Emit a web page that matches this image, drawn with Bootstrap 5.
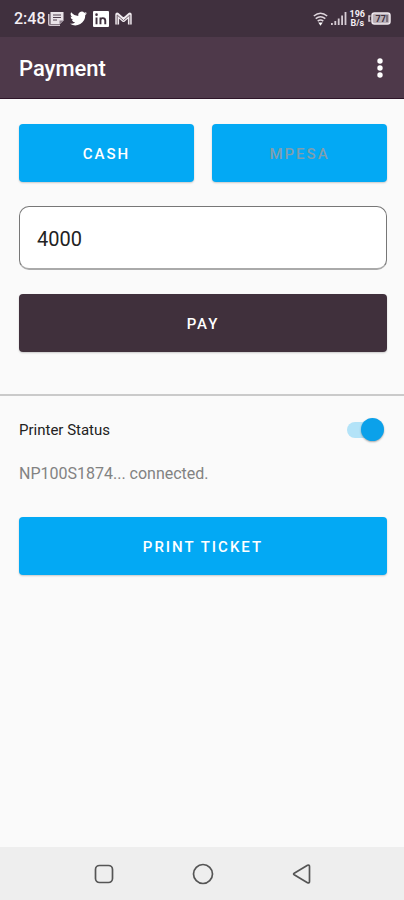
<!DOCTYPE html>
<html lang="en">
<head>
<meta charset="utf-8">
<meta name="viewport" content="width=device-width, initial-scale=1">
<title>Payment</title>
<link href="https://cdn.jsdelivr.net/npm/bootstrap@5.3.0/dist/css/bootstrap.min.css" rel="stylesheet">
<style>
  body { font-family: Roboto, "Liberation Sans", sans-serif; background: #fafafa; }
  svg { display: block; flex: none; }
  .status-bar { background: #40303e; height: 37px; padding: 0 13px 0 14px; color: #f4eef3; }
  .clock { font-size: 16px; line-height: 20px; font-weight: 500; margin-right: -4px; }
  .notices { gap: 6px; }
  .signals { gap: 3px; }
  .net-speed { font-size: 9px; line-height: 9px; font-weight: 700; }
  .app-bar { background: #4e394a; height: 62px; padding: 0 17px 0 19px; border-bottom: 1px solid #2e1529; }
  .app-title { font-size: 22px; line-height: 28px; font-weight: 500; padding-top: 2px; }
  .section { padding: 0 17px 0 19px; }
  .pay-form { padding-top: 25px; padding-bottom: 42px; gap: 24px; border-bottom: 2px solid #cacaca; }
  .pair { gap: 18px; }
  .action { height: 58px; border: 0; border-radius: 4px; padding: 8px 12px 6px; font-size: 15px; line-height: 20px; font-weight: 500; letter-spacing: 2px; color: #fff; background: #03a9f4; box-shadow: 0 1px 2px #0003; }
  .action:hover { background: #0398db; color: #fff; }
  .action:disabled { background: #03a9f4; color: #7f9fae; opacity: 1; }
  .action-dark, .action-dark:hover { background: #40303c; }
  .amount { height: 64px; border: 1px solid #777; border-bottom: 2px solid #aaa; border-radius: 10px; padding: 2px 17px 0; font-size: 20px; background: #fff; color: #222; }
  .printer { padding-top: 22px; }
  .printer-label { font-size: 15px; line-height: 24px; color: #222; }
  .printer-note { font-size: 16px; line-height: 24px; color: #828282; margin: 20px 0 31px; }
  .toggle { appearance: none; position: relative; width: 37px; height: 24px; margin: 0 3px 0 0; cursor: pointer; }
  .toggle::before { content: ""; position: absolute; left: 0; top: 4px; width: 34px; height: 16px; border-radius: 8px; background: #b3e3f8; }
  .toggle::after { content: ""; position: absolute; right: 0; top: 0; width: 23px; height: 23px; border-radius: 50%; background: #0ba1ea; box-shadow: 0 1px 2px #0005; }
  .toggle:not(:checked)::after { right: 14px; background: #f1f1f1; }
  .nav-keys { background: #eee; height: 53px; padding: 0 53px 0 55px; }
  .nav-keys .btn { width: 99px; }
</style>
<script defer src="https://cdn.jsdelivr.net/npm/bootstrap@5.3.0/dist/js/bootstrap.bundle.min.js"></script>
</head>
<body class="d-flex flex-column min-vh-100">
<div class="status-bar d-flex align-items-center justify-content-between">
  <div class="notices d-flex align-items-center">
    <span class="clock">2:48</span>
    <svg width="16" height="16" viewBox="0 0 16 16" aria-hidden="true"><path d="M0 3h1.500v10.500H12V15H2Q0 15 0 13z" fill="#cfc5cd"/><path d="M2.500 1h13v8.500L12 13H2.500z" fill="#e9e3e8"/><path d="M5 4h8M5 6.500h8M5 9h4" stroke="#51404f" stroke-width="1"/><path d="M11.500 13V9.500h4z" fill="#8d7e8b"/></svg>
    <svg width="17" height="17" viewBox="0 0 24 24" fill="#fff" aria-hidden="true"><path d="M24 4.600a10 10 0 0 1-2.800.8 5 5 0 0 0 2.100-2.700 10 10 0 0 1-3.100 1.200 4.900 4.900 0 0 0-8.400 4.500A14 14 0 0 1 1.700 3.200a4.900 4.900 0 0 0 1.500 6.500 5 5 0 0 1-2.200-.6 4.900 4.900 0 0 0 3.900 4.900 5 5 0 0 1-2.200.1 4.900 4.900 0 0 0 4.600 3.400A10 10 0 0 1 0 19.500 14 14 0 0 0 21.500 7.100 10 10 0 0 0 24 4.600z"/></svg>
    <svg width="16" height="16" viewBox="0 0 15 15" aria-hidden="true"><rect width="15" height="15" rx="1" fill="#fff"/><path d="M3.300 6v6.500M7 6v6.500M7 9q0-2.300 2.200-2.300T11.500 9v3.500" fill="none" stroke="#40303e" stroke-width="1.800"/><circle cx="3.300" cy="3.400" r="1.200" fill="#40303e"/></svg>
    <svg width="17" height="14" viewBox="0 0 17 14" fill="none" aria-hidden="true"><path d="M2.200 12.500V2.500L8.500 8l6.300-5.500v10" stroke="#f0eaef" stroke-width="3.800" stroke-linejoin="round"/><path d="M2.200 13V3l6.300 5.500L14.800 3v10" stroke="#75646f" stroke-width="1"/></svg>
  </div>
  <div class="signals d-flex align-items-center">
    <svg width="15" height="14" viewBox="0 0 15 14" fill="none" stroke="#dfd6dd" stroke-width="1.500" aria-hidden="true"><path d="M.8 4q6.700-5.500 13.400 0M2.700 6.700q4.800-4 9.600 0M4.700 9.200q2.800-2.300 5.600 0"/><path d="M5.300 10.500h4.400L7.500 13.800z" fill="#fff" stroke="none"/></svg>
    <svg width="16" height="13" viewBox="0 0 16 13" fill="#d6ccd4" aria-hidden="true"><path d="M0 11h1.800v2H0zM3.400 9h1.800v4H3.400zM6.800 6.500h1.800V13H6.800zM10.200 3.500H12V13h-1.800zM13.600 0h1.800v13h-1.800z"/></svg>
    <div class="net-speed text-center">196<br>B/s</div>
    <svg width="23" height="13" viewBox="0 0 23 13" aria-hidden="true"><path d="M2.500 4H1v5h1.500" fill="none" stroke="#ddd3db" stroke-width="1.500"/><rect x="4" y="1" width="18" height="11" rx="2.500" fill="#b9afb7" stroke="#eee7ed" stroke-width="1.500"/><text x="7.500" y="10" font-family="Roboto, sans-serif" font-size="9" font-weight="700" fill="#40303e">77</text><path d="M19 3v7" stroke="#40303e"/></svg>
  </div>
</div>
<header class="app-bar d-flex align-items-center justify-content-between">
  <h1 class="app-title text-white m-0">Payment</h1>
  <button type="button" class="btn p-0 border-0" aria-label="More options">
    <svg width="14" height="22" viewBox="0 0 14 22" fill="#fff" aria-hidden="true"><circle cx="7" cy="4" r="2.700"/><circle cx="7" cy="11" r="2.700"/><circle cx="7" cy="18" r="2.700"/></svg>
  </button>
</header>
<main class="flex-grow-1">
  <form class="section pay-form d-flex flex-column">
    <div class="pair d-flex">
      <button type="button" class="btn action flex-fill w-50">CASH</button>
      <button type="button" class="btn action flex-fill w-50" disabled>MPESA</button>
    </div>
    <input type="text" class="form-control amount" inputmode="numeric" value="4000" aria-label="Amount">
    <button type="button" class="btn action action-dark w-100">PAY</button>
  </form>
  <section class="section printer">
    <div class="d-flex align-items-center justify-content-between">
      <label class="printer-label" for="printer">Printer Status</label>
      <input type="checkbox" role="switch" id="printer" class="toggle" checked>
    </div>
    <p class="printer-note">NP100S1874... connected.</p>
    <button type="button" class="btn action w-100">PRINT TICKET</button>
  </section>
</main>
<nav class="nav-keys d-flex align-items-center justify-content-between" aria-label="System">
  <button type="button" class="btn border-0 p-0 d-flex justify-content-center" aria-label="Recent apps"><svg width="20" height="20" viewBox="0 0 20 20" fill="none" stroke="#555" stroke-width="1.700"><rect x="1.500" y="1.500" width="17" height="17" rx="4"/></svg></button>
  <button type="button" class="btn border-0 p-0 d-flex justify-content-center" aria-label="Home"><svg width="22" height="22" viewBox="0 0 22 22" fill="none" stroke="#555" stroke-width="1.700"><circle cx="11" cy="11" r="9.500"/></svg></button>
  <button type="button" class="btn border-0 p-0 d-flex justify-content-center" aria-label="Back"><svg width="20" height="20" viewBox="0 0 20 20" fill="none" stroke="#555" stroke-width="1.700" stroke-linejoin="round"><path d="M2.200 9.200 15.500 1.300Q17.500.5 17.500 2.500v15q0 2-2 1.200L2.200 10.800q-1.200-.8 0-1.600z"/></svg></button>
</nav>
</body>
</html>
